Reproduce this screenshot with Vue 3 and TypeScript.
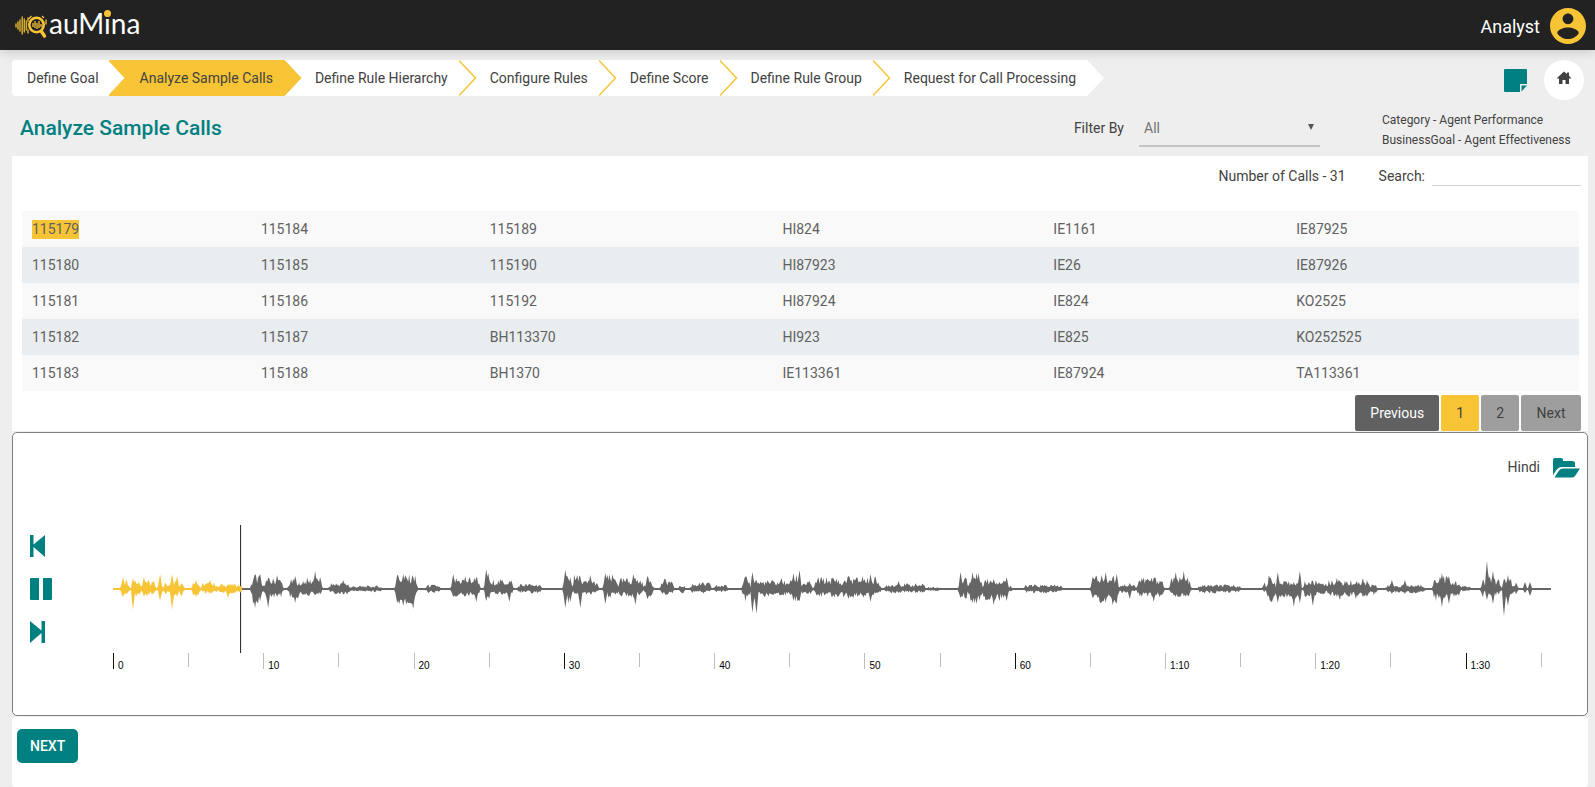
<script setup lang="ts">
import { ref } from 'vue'

const steps = [
  'Define Goal',
  'Analyze Sample Calls',
  'Define Rule Hierarchy',
  'Configure Rules',
  'Define Score',
  'Define Rule Group',
  'Request for Call Processing',
]
const activeStep = 1

const rows = [
  ['115179', '115184', '115189', 'HI824', 'IE1161', 'IE87925'],
  ['115180', '115185', '115190', 'HI87923', 'IE26', 'IE87926'],
  ['115181', '115186', '115192', 'HI87924', 'IE824', 'KO2525'],
  ['115182', '115187', 'BH113370', 'HI923', 'IE825', 'KO252525'],
  ['115183', '115188', 'BH1370', 'IE113361', 'IE87924', 'TA113361'],
]
const selected = ref('115179')
const filter = ref('All')
const search = ref('')

// Bursts of speech: start, end, height above and below the centre line
const bursts: number[][] = [
  [7, 16, 8, 7], [20, 29, 10, 7], [29, 37, 11, 8], [37, 43, 8, 6], [45, 50, 9, 7], [50, 55, 7, 5],
  [55, 64, 8, 7], [66, 71, 9, 6], [78, 87, 7, 6], [88, 105, 6, 4], [105, 129, 5, 4],
  [138, 149, 13, 15], [150, 170, 10, 8], [175, 187, 9, 9], [187, 209, 10, 6], [216, 237, 6, 5],
  [237, 269, 3, 3], [282, 304, 13, 14], [312, 327, 4, 4], [338, 367, 11, 7], [371, 378, 15, 11],
  [378, 400, 9, 6], [404, 428, 5, 4], [450, 459, 15, 14], [459, 468, 13, 8], [468, 485, 8, 5],
  [490, 505, 13, 8], [505, 530, 10, 7], [531, 540, 10, 8], [547, 560, 9, 6], [565, 572, 4, 4],
  [577, 598, 6, 4], [600, 615, 4, 3], [629, 637, 11, 12], [638, 643, 13, 17], [643, 675, 8, 7],
  [675, 687, 14, 11], [687, 699, 7, 5], [701, 728, 11, 8], [728, 767, 11, 8], [771, 812, 5, 4],
  [812, 827, 2, 2], [845, 855, 12, 9], [855, 869, 14, 13], [869, 895, 10, 11], [895, 899, 4, 3],
  [910, 949, 4, 4], [977, 1005, 12, 13], [1005, 1022, 5, 4], [1023, 1050, 11, 8],
  [1056, 1077, 11, 7], [1084, 1127, 4, 4], [1149, 1152, 13, 4], [1153, 1162, 12, 14],
  [1162, 1187, 7, 8], [1189, 1213, 8, 7], [1213, 1257, 8, 7], [1257, 1263, 7, 6],
  [1272, 1311, 4, 4], [1319, 1336, 13, 11], [1336, 1347, 8, 7], [1347, 1357, 3, 3],
  [1367, 1371, 11, 9], [1372, 1379, 15, 10], [1379, 1387, 9, 6], [1389, 1399, 9, 9],
  [1399, 1404, 7, 5],
]

// Single peaks: position, height above, height below
const peaks: number[][] = [
  [10, 12, 8], [20, 11, 21], [31, 12, 8], [47, 15, 12], [59, 15, 21], [64, 13, 8], [83, 9, 8],
  [97, 9, 5], [115, 5, 9], [142, 15, 19], [147, 15, 12], [155, 11, 19], [164, 14, 8],
  [182, 13, 14], [202, 18, 6], [207, 12, 5], [230, 9, 5], [284, 14, 14], [290, 15, 17],
  [300, 12, 20], [340, 15, 8], [352, 13, 6], [363, 12, 13],
  [373, 20, 12], [396, 8, 13], [452, 19, 19], [467, 12, 19], [477, 14, 5], [492, 16, 15],
  [520, 15, 8], [522, 11, 16], [534, 13, 10], [552, 10, 6], [639, 17, 24], [643, 9, 25],
  [668, 11, 6], [680, 15, 12], [686, 19, 12], [735, 13, 10], [749, 13, 6],
  [757, 15, 13], [785, 8, 4], [847, 17, 9], [859, 17, 14], [863, 16, 15], [880, 10, 16],
  [893, 12, 12], [979, 12, 9], [988, 14, 13], [992, 17, 14], [999, 12, 16], [1003, 15, 8],
  [1016, 6, 10], [1028, 11, 7], [1040, 11, 13], [1062, 17, 8], [1070, 18, 7],
  [1164, 17, 14], [1180, 7, 18], [1186, 18, 14], [1199, 8, 17], [1223, 11, 8], [1226, 8, 11],
  [1242, 6, 10], [1249, 11, 8], [1278, 9, 5], [1291, 9, 5], [1328, 16, 18], [1335, 13, 15],
  [1373, 28, 11], [1379, 18, 15], [1390, 10, 27], [1394, 14, 17], [1411, 7, 4], [1416, 7, 7],
]

const span = 1438
const centre = 64

function noise(n: number): number {
  const v = Math.sin(n * 12.9898) * 43758.5453
  return v - Math.floor(v)
}

function buildWave(): string {
  const up: number[] = new Array(span).fill(1)
  const down: number[] = new Array(span).fill(1)
  for (const [from, to, high, low] of bursts) {
    for (let x = from; x <= to; x++) {
      const edge = Math.min(1, (Math.min(x - from, to - x) + 1) / 3)
      up[x] = Math.max(up[x], high * edge * (0.4 + 0.75 * noise(x) ** 1.3))
      down[x] = Math.max(down[x], low * edge * (0.4 + 0.75 * noise(x + 3000) ** 1.3))
    }
  }
  for (const [at, high, low] of peaks) {
    up[at] = Math.max(up[at], high)
    down[at] = Math.max(down[at], low)
    for (const side of [at - 1, at + 1]) {
      up[side] = Math.max(up[side], high * 0.6)
      down[side] = Math.max(down[side], low * 0.6)
    }
  }
  const top = up.map((v, x) => `${x},${(centre - v).toFixed(1)}`)
  const bottom = down.map((v, x) => `${x},${(centre + v).toFixed(1)}`).reverse()
  return `M${top.join('L')}L${bottom.join('L')}Z`
}

const wave = buildWave()
const playedAt = 128

const duration = 95.75
const ticks = Array.from({ length: 20 }, (_, i) => {
  const sec = i * 5
  const label = sec < 61 ? `${sec}` : `${Math.floor(sec / 60)}:${sec % 60}`
  return {
    sec,
    label: sec % 10 === 0 ? label : '',
    kind: sec % 30 === 0 ? 'major' : sec % 10 === 0 ? 'mid' : 'minor',
    width: `${(Math.min(5, duration - sec) / duration) * 100}%`,
  }
})
</script>

<template>
  <div class="app">
    <header class="topbar">
      <div class="brand">
        <svg class="mark" viewBox="0 0 32 30" width="32" height="30" aria-hidden="true">
          <g stroke="#d9ac2e" stroke-width="1.500" stroke-linecap="round">
            <path d="M1 14v3M3 12v7M5 10v11M7.200 7v17M9.300 9v13M11.400 11v9M13 8v3M13 20v3M31 10v4" />
          </g>
          <g fill="none" stroke="#f7c435">
            <circle cx="21.500" cy="15" r="7.200" stroke-width="2.600" />
            <path d="M18 13v4M20 11v7M22 13v6M24 11v7M26 14v3" stroke-width="1.300" />
            <path d="M13.500 9l3-3M27 6l2 2" stroke-width="1.200" />
            <path d="M26.500 21.500l3 4.500" stroke-width="3.400" stroke-linecap="round" />
          </g>
        </svg>
        <span class="wordmark">auM<span class="dotted">i</span>na</span>
      </div>
      <button class="user" type="button">
        <span>Analyst</span>
        <svg viewBox="2 2 20 20" width="36" height="36" aria-hidden="true">
          <path fill="#f7c435" d="M12 2C6.480 2 2 6.480 2 12s4.480 10 10 10 10-4.480 10-10S17.520 2 12 2zm0 3c1.660 0 3 1.340 3 3s-1.340 3-3 3-3-1.340-3-3 1.340-3 3-3zm0 14.200c-2.500 0-4.710-1.280-6-3.220.030-1.990 4-3.080 6-3.080 1.990 0 5.970 1.090 6 3.080-1.290 1.940-3.500 3.220-6 3.220z" />
        </svg>
      </button>
    </header>

    <main class="content">
      <div class="navrow">
        <nav aria-label="Steps">
          <ol class="steps">
            <li v-for="(step, i) in steps" :key="step" :class="{ active: i === activeStep }">
              <a href="#">{{ step }}</a>
              <svg class="arrow" viewBox="0 0 18 36" width="18" height="36" aria-hidden="true">
                <path class="fill" d="M0 0L17 18L0 36Z" />
                <path v-if="i < steps.length - 1" d="M0 0.500L16.500 18L0 35.500" fill="none" stroke="#f7c435" stroke-width="1.500" />
              </svg>
            </li>
          </ol>
        </nav>
        <div class="shortcuts">
          <button type="button" class="note" aria-label="Notes">
            <svg viewBox="0 0 23 23" width="23" height="23" aria-hidden="true">
              <path fill="#008080" d="M1 0h21a1 1 0 0 1 1 1v14h-7v8H1a1 1 0 0 1-1-1V1a1 1 0 0 1 1-1zM17.500 16.500H23L17.500 22.500z" />
            </svg>
          </button>
          <button type="button" class="home" aria-label="Home">
            <svg viewBox="0 0 16 14" width="16" height="14" aria-hidden="true">
              <path fill="#424242" d="M8 0.500L11 3V1.500h2v3.300L15.500 7.500H13V13H9.500V9H6.500v4H3V7.500H0.500z" />
            </svg>
          </button>
        </div>
      </div>

      <div class="titlerow">
        <h1>Analyze Sample Calls</h1>
        <label class="filterlabel" for="filter">Filter By</label>
        <div class="selectwrap">
          <select id="filter" v-model="filter">
            <option>All</option>
          </select>
          <svg viewBox="0 0 6 6" width="6" height="6" aria-hidden="true"><path fill="#555" d="M0 0h6L3 6z" /></svg>
        </div>
        <div class="meta">
          <div>Category - Agent Performance</div>
          <div>BusinessGoal - Agent Effectiveness</div>
        </div>
      </div>

      <section class="calls">
        <div class="tools">
          <span>Number of Calls - 31</span>
          <label for="search">Search:</label>
          <input id="search" v-model="search" type="text" />
        </div>
        <table>
          <colgroup>
            <col class="narrow" /><col class="narrow" /><col class="wide" />
            <col class="medium" /><col class="small" /><col class="wide" />
          </colgroup>
          <tbody>
            <tr v-for="row in rows" :key="row[0]">
              <td v-for="id in row" :key="id">
                <span :class="{ picked: id === selected }" @click="selected = id">{{ id }}</span>
              </td>
            </tr>
          </tbody>
        </table>
        <div class="pager">
          <button type="button" class="prev">Previous</button>
          <button type="button" class="current">1</button>
          <button type="button">2</button>
          <button type="button" class="next">Next</button>
        </div>
      </section>

      <section class="player">
        <div class="language">
          <span>Hindi</span>
          <button type="button" aria-label="Open folder">
            <svg viewBox="0 0 27 20" width="27" height="20" aria-hidden="true">
              <path fill="#008080" d="M0 17V2Q0 0 2 0H8Q10 0 10 2V3H19Q22 3 22 5V9H9Q5.500 9 3.500 12ZM1.500 19.500L6 12.500Q7.500 10.500 10 10.500H27L22 18Q21 19.500 19 19.500Z" />
            </svg>
          </button>
        </div>
        <div class="deck">
          <div class="controls">
            <button type="button" aria-label="Back">
              <svg viewBox="0 0 15 22" width="15" height="22"><path fill="#008080" d="M0 0h3.500v9.500L15 0v22L3.500 12v10H0z" /></svg>
            </button>
            <button type="button" aria-label="Pause">
              <svg viewBox="0 0 22 22" width="22" height="22"><path fill="#008080" d="M1 0h8v22H1a1 1 0 0 1-1-1V1a1 1 0 0 1 1-1zM13 0h8a1 1 0 0 1 1 1v20a1 1 0 0 1-1 1h-8z" /></svg>
            </button>
            <button type="button" aria-label="Forward">
              <svg viewBox="0 0 15 22" width="15" height="22"><path fill="#008080" d="M15 0h-3.500v9.500L0 0v22l11.500-10v10H15z" /></svg>
            </button>
          </div>
          <div class="track">
            <svg class="wave" viewBox="0 0 1438 128" preserveAspectRatio="none" aria-label="Waveform">
              <defs>
                <clipPath id="played"><rect x="0" y="0" :width="playedAt + 1" height="128" /></clipPath>
                <clipPath id="rest"><rect :x="playedAt + 1" y="0" :width="span - playedAt" height="128" /></clipPath>
              </defs>
              <rect :x="playedAt - 1" y="0" width="1" height="128" fill="#222" />
              <path :d="wave" fill="#666" clip-path="url(#rest)" />
              <path :d="wave" fill="#f7c435" clip-path="url(#played)" />
            </svg>
            <div class="timeline">
              <div v-for="t in ticks" :key="t.sec" class="tick" :class="t.kind" :style="{ width: t.width }">
                {{ t.label }}
              </div>
            </div>
          </div>
        </div>
      </section>

      <footer class="actions">
        <button type="button">NEXT</button>
      </footer>
    </main>
  </div>
</template>

<style>
body {
  background: #eee;
}
</style>

<style scoped>
.app {
  display: flex;
  flex-direction: column;
  min-height: 100vh;
  font-family: Roboto, "Liberation Sans", sans-serif;
  font-size: 14px;
  line-height: 20px;
  color: #424242;
}
* {
  box-sizing: border-box;
}
button {
  font: inherit;
  color: inherit;
  border: 0;
  padding: 0;
  background: none;
  cursor: pointer;
}
svg {
  display: block;
}
.topbar {
  display: flex;
  align-items: center;
  justify-content: space-between;
  height: 50px;
  padding: 0 9px 0 15px;
  background: #222;
  box-shadow: 0 2px 10px rgba(0, 0, 0, 0.16);
}
.brand {
  display: flex;
  align-items: center;
  gap: 2px;
}
.wordmark {
  font-family: Lato, sans-serif;
  font-size: 28px;
  line-height: 46px;
  padding-bottom: 4px;
  color: #fff;
}
.dotted {
  position: relative;
}
.dotted::after {
  content: "";
  position: absolute;
  left: 0;
  top: 4px;
  width: 7px;
  height: 7px;
  border-radius: 50%;
  background: #f7c435;
}
.user {
  display: flex;
  align-items: center;
  gap: 10px;
  padding-top: 2px;
  color: #fff;
  font-size: 18px;
}
.user span {
  padding-top: 2px;
}
.content {
  display: flex;
  flex-direction: column;
  flex: 1;
  padding: 10px 7px 0 12px;
}
.navrow {
  display: flex;
  justify-content: space-between;
  height: 40px;
  padding-right: 4px;
}
.steps {
  display: flex;
  margin: 0;
  padding: 0;
  list-style: none;
}
.steps li {
  display: flex;
  height: 36px;
  background: #fff;
}
.steps li:first-child {
  border-radius: 4px 0 0 4px;
}
.steps a {
  padding: 8px 11px 8px 31px;
  color: inherit;
  text-decoration: none;
  white-space: nowrap;
}
.steps li:first-child a {
  padding: 8px 10px 8px 15px;
}
.steps .active {
  background: #f7c435;
}
.arrow {
  position: relative;
  z-index: 1;
  margin-right: -18px;
}
.fill {
  fill: #fff;
}
.active .fill {
  fill: #f7c435;
}
.shortcuts {
  display: flex;
  align-items: center;
  gap: 17px;
}
.home {
  display: grid;
  place-items: center;
  width: 40px;
  height: 40px;
  padding-bottom: 4px;
  border-radius: 50%;
  background: #fff;
}
.titlerow {
  display: flex;
  align-items: center;
  height: 56px;
  padding: 0 14px 0 8px;
}
h1 {
  flex: 1;
  margin: 0;
  font-size: 21px;
  font-weight: 500;
  color: #008080;
}
.filterlabel {
  margin-right: 15px;
}
.selectwrap {
  display: grid;
  align-items: center;
  width: 181px;
  margin: 2px 62px 0 0;
}
.selectwrap > * {
  grid-area: 1 / 1;
}
.selectwrap svg {
  justify-self: end;
  margin: 0 6px 4px 0;
  pointer-events: none;
}
select {
  appearance: none;
  width: 100%;
  height: 36px;
  padding: 0 5px;
  border: 0;
  border-bottom: 2px solid #c4c4c4;
  border-radius: 0;
  background: none;
  color: #757575;
  font: inherit;
}
.meta {
  width: 192px;
  padding-top: 4px;
  font-size: 12px;
  white-space: nowrap;
}
.calls {
  margin-bottom: 1px;
  background: #fff;
}
.tools {
  display: flex;
  justify-content: flex-end;
  height: 55px;
  padding: 6px 7px 0 0;
  line-height: 28px;
}
.tools span {
  margin-right: 33px;
}
.tools label {
  margin-right: 7px;
}
.tools input {
  width: 149px;
  height: 24px;
  padding: 0 4px;
  border: 0;
  border-bottom: 1px solid #d0d0d0;
  background: none;
  font: inherit;
}
table {
  width: calc(100% - 19px);
  margin: 0 9px 0 10px;
  table-layout: fixed;
  border-collapse: collapse;
  color: #616161;
}
.narrow {
  width: 14.7%;
}
.wide {
  width: 18.8%;
}
.medium {
  width: 17.4%;
}
.small {
  width: 15.6%;
}
tr {
  height: 36px;
  background: #f9f9f9;
}
tr:nth-child(even) {
  background: #e9edef;
}
td {
  padding: 0 10px;
}
td span {
  display: inline-block;
  line-height: 19px;
  cursor: pointer;
}
.picked {
  background: #f7c435;
}
.pager {
  display: flex;
  justify-content: flex-end;
  gap: 2px;
  padding: 4px 7px 0 0;
}
.pager button {
  height: 36px;
  padding: 0 15px;
  border-radius: 2px;
  background: #9e9e9e;
}
.pager .prev {
  min-width: 84px;
  background: #616161;
  color: #fff;
}
.pager .current {
  background: #f7c435;
}
.pager .next {
  min-width: 60px;
}
.player {
  border: 1px solid #808080;
  border-radius: 5px;
  background: #fff;
  height: 284px;
  padding: 25px 7px 0 17px;
}
.language {
  display: flex;
  justify-content: flex-end;
  gap: 13px;
  line-height: 18px;
}
.deck {
  display: flex;
  align-items: flex-start;
  padding: 47px 28px 0 0;
}
.controls {
  display: flex;
  flex-direction: column;
  gap: 21px;
  width: 83px;
  padding-top: 10px;
}
.track {
  flex: 1;
}
.wave {
  width: 100%;
  height: 128px;
}
.timeline {
  display: flex;
}
.tick {
  flex: none;
  height: 16px;
  padding: 3px 0 0 4px;
  border-left: 1px solid #bdbdbd;
  font-family: "Liberation Sans", Arial, sans-serif;
  font-size: 10px;
  line-height: 20px;
  color: #000;
}
.minor {
  height: 14px;
}
.major {
  border-left-color: #111;
}
.actions {
  flex: 1;
  margin-top: 1px;
  padding: 12px 5px;
  border-radius: 4px;
  background: #fff;
}
.actions button {
  height: 34px;
  padding: 0 13px;
  border-radius: 5px;
  background: #008080;
  color: #fff;
  font-weight: 500;
}
</style>
